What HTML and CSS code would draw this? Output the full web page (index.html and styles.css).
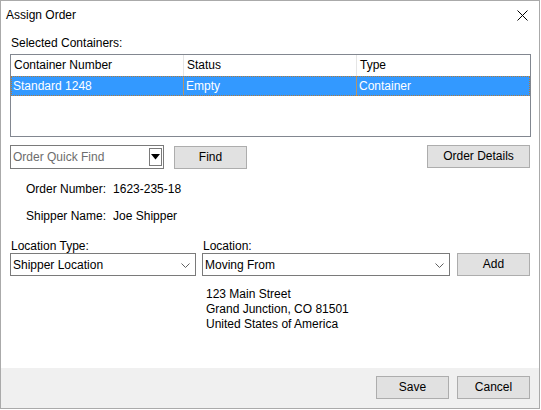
FILE: index.html
```html
<!DOCTYPE html>
<html>
<head>
<meta charset="utf-8">
<link rel="stylesheet" href="styles.css">
</head>
<body>
<div class="window">
  <div class="titlebar">
    <span class="title">Assign Order</span>
    <svg class="close" width="11" height="11" viewBox="0 0 11 11"><path d="M0.5 0.5L10.5 10.5M10.5 0.5L0.5 10.5" stroke="#000" stroke-width="1" fill="none"/></svg>
  </div>
  <div class="content">
    <div class="label sel-label">Selected Containers:</div>
    <div class="listbox">
      <div class="lrow header">
        <div class="cell c1">Container Number</div>
        <div class="cell c2">Status</div>
        <div class="cell c3">Type</div>
      </div>
      <div class="lrow selected">
        <div class="cell c1">Standard 1248</div>
        <div class="cell c2">Empty</div>
        <div class="cell c3">Container</div>
      </div>
    </div>
    <div class="findrow">
      <div class="combo">
        <span class="placeholder">Order Quick Find</span>
        <span class="dropbtn"><svg width="9" height="6" viewBox="0 0 9 6"><path d="M0 0H9L4.5 5.5Z" fill="#000"/></svg></span>
      </div>
      <button class="btn find">Find</button>
      <span class="spacer"></span>
      <button class="btn details">Order Details</button>
    </div>
    <div class="info first"><span class="k">Order Number:</span><span>1623-235-18</span></div>
    <div class="info"><span class="k">Shipper Name:</span><span>Joe Shipper</span></div>
    <div class="locrow">
      <div class="field f1">
        <div class="label">Location Type:</div>
        <div class="select s1"><span>Shipper Location</span><svg class="chev" width="9" height="5" viewBox="0 0 9 5"><path d="M0.5 0.5L4.5 4.5L8.5 0.5" stroke="#606060" fill="none"/></svg></div>
      </div>
      <div class="field f2">
        <div class="label">Location:</div>
        <div class="select s2"><span>Moving From</span><svg class="chev" width="9" height="5" viewBox="0 0 9 5"><path d="M0.5 0.5L4.5 4.5L8.5 0.5" stroke="#606060" fill="none"/></svg></div>
      </div>
      <button class="btn add">Add</button>
    </div>
    <div class="address">
      <div>123 Main Street</div>
      <div>Grand Junction, CO 81501</div>
      <div>United States of America</div>
    </div>
  </div>
  <div class="footer">
    <button class="btn">Save</button>
    <button class="btn">Cancel</button>
  </div>
</div>
</body>
</html>
```
FILE: styles.css
```css
* { box-sizing: border-box; }
html, body { margin: 0; padding: 0; background: #fff; }
body {
  font-family: "Liberation Sans", Arial, sans-serif;
  font-size: 12px;
  color: #000;
}
.window {
  width: 540px;
  height: 409px;
  border: 1px solid #aaaaaa;
  display: flex;
  flex-direction: column;
  background: #fff;
}
.titlebar {
  height: 27px;
  display: flex;
  align-items: center;
  padding-left: 5px;
  padding-right: 11px;
  padding-top: 1px;
}
.title { flex: 1; line-height: 14px; }
.close { display: block; margin-top: 0; }
.content {
  flex: 1;
  padding: 0 8px 0 9px;
}
.label { line-height: 14px; height: 14px; white-space: nowrap; }
.sel-label { margin-top: 8px; padding-left: 1px; }
.listbox {
  margin-top: 4px;
  height: 83px;
  border: 1px solid #828790;
}
.lrow { display: flex; }
.header { height: 21px; align-items: center; }
.header .cell { border-right: 1px solid #e5e5e5; height: 21px; line-height: 21px; padding-left: 3px; }
.header .c3 { border-right: none; }
.selected {
  height: 20px;
  background: #3399ff;
  color: #fff;
  outline: 1px dotted #b07a3a;
  outline-offset: -1px;
}
.selected .cell { line-height: 20px; padding-left: 2px; border-right: 1px solid #b3956b; }
.selected .c3 { border-right: none; }
.c1 { width: 173px; }
.c2 { width: 173px; }
.c3 { flex: 1; }
.findrow {
  margin-top: 8px;
  display: flex;
  align-items: flex-start;
  height: 24px;
}
.combo {
  width: 154px;
  height: 24px;
  border: 1px solid #7a7a7a;
  display: flex;
  align-items: center;
  padding-left: 2px;
  padding-right: 1px;
}
.placeholder { flex: 1; color: #6d6d6d; }
.dropbtn {
  width: 13px;
  height: 18px;
  border: 1px solid #7a7a7a;
  display: flex;
  align-items: center;
  justify-content: center;
  background: #fff;
}
.dropbtn svg { display: block; }
.btn {
  font-family: "Liberation Sans", Arial, sans-serif;
  font-size: 12px;
  color: #000;
  background: #e1e1e1;
  border: 1px solid #adadad;
  width: 73px;
  height: 23px;
  padding: 0;
  margin: 0;
  line-height: 21px;
}
.find { margin-left: 10px; margin-top: 1px; }
.spacer { flex: 1; }
.details { width: 103px; margin-right: 1px; }
.info { line-height: 14px; height: 14px; padding-left: 16px; display: flex; }
.info .k { margin-right: 7px; }
.info.first { margin-top: 13px; }
.info + .info { margin-top: 13px; }
.locrow {
  margin-top: 16px;
  display: flex;
  align-items: flex-end;
}
.field { display: flex; flex-direction: column; gap: 0; }
.field .label { padding-left: 1px; }
.f2 { margin-left: 6px; }
.f2 .label { padding-left: 1px; }
.select {
  height: 23px;
  border: 1px solid #7a7a7a;
  display: flex;
  align-items: center;
  padding-left: 2px;
  padding-right: 5px;
}
.select span { flex: 1; }
.chev { display: block; margin-top: 2px; }
.s1 { width: 186px; }
.s2 { width: 248px; }
.add { margin-left: 7px; }
.address {
  margin-top: 11px;
  padding-left: 196px;
  line-height: 15px;
}
.footer {
  height: 40px;
  background: #f0f0f0;
  display: flex;
  justify-content: flex-end;
  align-items: flex-start;
  padding-top: 8px;
  padding-right: 9px;
  gap: 8px;
}
```
